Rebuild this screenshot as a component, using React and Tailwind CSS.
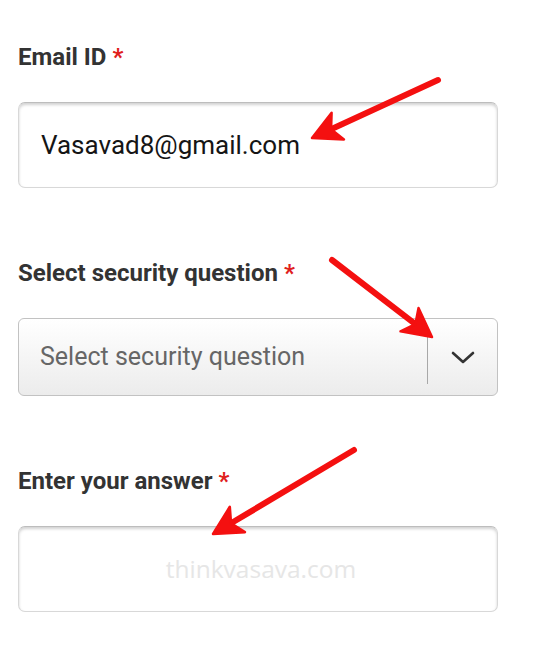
import React from "react";

const Label = ({ children, className = "" }) => (
  <div className={`text-[24px] leading-[28px] font-bold text-[#333] ${className}`}>
    {children} <span className="text-[#e0201c]">*</span>
  </div>
);

const Arrow = ({ x1, y1, x2, y2 }) => {
  // arrowhead drawn at (x2, y2) pointing along the line
  const a = Math.atan2(y2 - y1, x2 - x1);
  const len = 32;
  const spread = 0.48;
  const p1 = [x2 - len * Math.cos(a - spread), y2 - len * Math.sin(a - spread)];
  const p2 = [x2 - len * Math.cos(a + spread), y2 - len * Math.sin(a + spread)];
  const bx = x2 - 21 * Math.cos(a);
  const by = y2 - 21 * Math.sin(a);
  return (
    <g>
      <line x1={x1} y1={y1} x2={bx} y2={by} stroke="#f41010" strokeWidth="6" strokeLinecap="round" />
      <polygon points={`${x2},${y2} ${p1[0]},${p1[1]} ${bx},${by} ${p2[0]},${p2[1]}`} fill="#f41010" stroke="#f41010" strokeWidth="2.5" strokeLinejoin="round" />
    </g>
  );
};

export default function App() {
  return (
    <div className="relative w-[540px] h-[650px] bg-white overflow-hidden" style={{ fontFamily: "Roboto, 'Liberation Sans', sans-serif" }}>
      <div className="pt-[43px] pl-[18px]">
        <Label>Email ID</Label>
        <div className="mt-[31px] w-[480px] h-[86px] flex items-center pl-[22px] rounded-[7px] border-[1.5px] border-[#d8d8d8] border-t-[#bdbdbd] shadow-[inset_0_2px_3px_rgba(0,0,0,0.18)] text-[26px] text-[#151515]">
          Vasavad8@gmail.com
        </div>

        <Label className="mt-[71px]">Select security question</Label>
        <div className="mt-[31px] w-[480px] h-[78px] flex items-stretch rounded-[6px] border-[1.5px] border-[#c2c2c2] bg-gradient-to-b from-white to-[#ececec]">
          <div className="flex-1 flex items-center pl-[21px] text-[25px] text-[#666]">
            Select security question
          </div>
          <div className="w-px bg-[#a8a8a8] my-[11px]" />
          <div className="w-[69px] flex items-center justify-center">
            <svg width="26" height="16" viewBox="0 0 26 16" fill="none">
              <path d="M3 4 L13 13 L23 4" stroke="#333" strokeWidth="2.6" strokeLinecap="round" strokeLinejoin="round" />
            </svg>
          </div>
        </div>

        <Label className="mt-[71px]">Enter your answer</Label>
        <div className="mt-[31px] w-[480px] h-[86px] flex items-center justify-center rounded-[7px] border-[1.5px] border-[#d8d8d8] border-t-[#bdbdbd] shadow-[inset_0_2px_3px_rgba(0,0,0,0.18)]">
          <span className="ml-[6px] text-[24.5px] text-[#e6e6e6]" style={{ fontFamily: "'Open Sans', sans-serif" }}>
            thinkvasava.com
          </span>
        </div>
      </div>

      <svg className="absolute inset-0 pointer-events-none" width="540" height="650">
        <Arrow x1={438} y1={80} x2={312} y2={138} />
        <Arrow x1={332} y1={260} x2={432} y2={337} />
        <Arrow x1={354} y1={450} x2={213} y2={534} />
      </svg>
    </div>
  );
}
